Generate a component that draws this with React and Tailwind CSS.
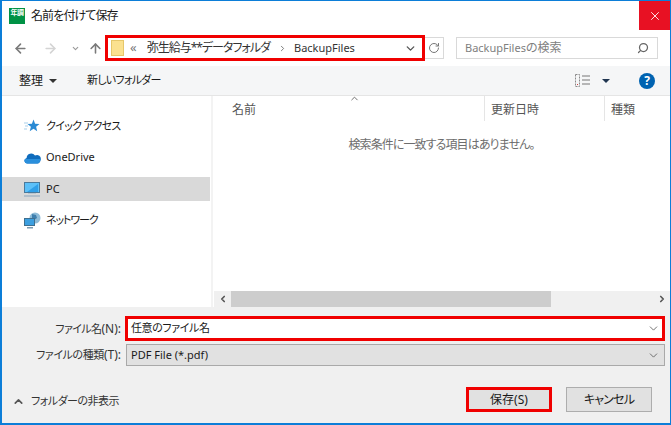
import React from "react";
import { ChevronDown, ChevronUp, ChevronLeft, ChevronRight, ArrowLeft, ArrowRight, ArrowUp, RotateCw, Search, X } from "lucide-react";

const navItems = [
  { label: "クイック アクセス", icon: <QuickIcon />, text: "text-[11px] tracking-[-0.7px]" },
  { label: "OneDrive", icon: <CloudIcon />, text: "text-[11px]" },
  { label: "PC", icon: <PcIcon />, selected: true, text: "text-[11px]" },
  { label: "ネットワーク", icon: <NetIcon />, text: "text-[11px] tracking-[-1.1px]" },
];

function QuickIcon() {
  return (
    <svg width="16" height="16" viewBox="0 0 16 16">
      <path d="M9.5 1.5l1.6 4.2 4.4.3-3.4 2.8 1.1 4.4-3.7-2.4-3.8 2.4 1.2-4.4-3.4-2.8 4.4-.3z" fill="#2a8ad4" />
      <path d="M0 5h4M1 8h3M0 11h3" stroke="#a9cfe9" strokeWidth="1" />
    </svg>
  );
}

function CloudIcon() {
  return (
    <svg width="17" height="12" viewBox="0 0 17 12">
      <path d="M3 11.5A2.8 2.8 0 0 1 2.6 6 4.6 4.6 0 0 1 11 3.6a3.8 3.8 0 0 1 5.6 4.4c-.3 2-1.6 3.5-3.2 3.5z" fill="#0f6cbd" />
      <path d="M3 11.5A2.8 2.8 0 0 1 1 7h15.6c-.3 2.5-1.6 4.5-3.2 4.5z" fill="#2a8fdc" />
    </svg>
  );
}

function PcIcon() {
  return (
    <svg width="17" height="15" viewBox="0 0 17 15">
      <rect x="0.5" y="0.5" width="15" height="10" fill="#5cc0f8" stroke="#4a7a9c" />
      <path d="M3 10L14 2v8z" fill="#2f9fe8" />
      <rect x="4" y="11" width="8" height="1" fill="#b9c6d0" />
      <rect x="0" y="13.5" width="16" height="1" fill="#8ba6bb" />
    </svg>
  );
}

function NetIcon() {
  return (
    <svg width="17" height="17" viewBox="0 0 17 17">
      <circle cx="11" cy="6" r="5.5" fill="#8fbcd8" />
      <path d="M8 2l4 1 1 3-3 2-2-2z" fill="#3f7fae" />
      <rect x="0.5" y="6.5" width="10" height="7" fill="#3c9fe0" stroke="#3f6f8f" />
      <rect x="3" y="15" width="6" height="1.5" fill="#7b9ab0" />
    </svg>
  );
}

function ViewIcon() {
  return (
    <svg width="16" height="13" viewBox="0 0 16 13">
      <rect x="0.5" y="0.5" width="4" height="12" fill="none" stroke="#8a8a8a" strokeDasharray="2 1" />
      <path d="M2 10h1v1H2z" fill="#d04040" />
      <path d="M7 2h8M7 6h8M7 10h8" stroke="#777" strokeWidth="1" />
    </svg>
  );
}

export default function App() {
  return (
    <div className="w-[671px] h-[425px] flex flex-col bg-white border-2 border-t border-r border-[#0c7ed8] text-[12px] [font-feature-settings:'palt'] text-[#1a1a1a] overflow-hidden font-['Noto_Sans','Noto_Sans_CJK_JP',sans-serif]">
      {/* title bar */}
      <div className="h-[29px] flex items-center shrink-0">
        <div className="w-[16px] h-[16px] ml-[7px] bg-[#009245] text-white text-[7px] font-bold leading-[10px] tracking-[-0.5px] text-center">年調</div>
        <span className="ml-[6px] tracking-[-0.9px]">名前を付けて保存</span>
        <div className="ml-auto w-[31px] h-[29px] bg-[#e81123] flex items-center justify-center">
          <X size={14} color="white" strokeWidth={1.5} />
        </div>
      </div>

      {/* address row */}
      <div className="h-[36px] flex items-center shrink-0 pl-[11px]">
        <ArrowLeft size={15} color="#7a7a7a" strokeWidth={2.5} />
        <ArrowRight size={15} color="#d4d4d4" strokeWidth={2.5} className="ml-[15px]" />
        <ChevronDown size={9} color="#9a9a9a" strokeWidth={3} className="ml-[13px]" />
        <ArrowUp size={15} color="#7a7a7a" strokeWidth={2.5} className="ml-[8px]" />
        <div className="ml-[2px] w-[320px] h-[26px] border-[3px] border-[#f00000] flex items-center pl-[3px] pr-[5px] text-[#333]">
          <div className="w-[13px] h-[16px] bg-[#fbe18f] border border-[#e6c76a] shrink-0" />
          <span className="ml-[6px] text-[#777] text-[13px]">«</span>
          <span className="ml-[10px] whitespace-nowrap tracking-[-1px]">弥生給与**データフォルダ</span>
          <ChevronRight size={9} color="#555" className="ml-[8px]" />
          <span className="ml-[7px] text-[11px]">BackupFiles</span>
          <ChevronDown size={13} color="#555" strokeWidth={2.5} className="ml-auto" />
        </div>
        <div className="w-[19px] h-[22px] border border-l-0 border-[#d9d9d9] flex items-center justify-center">
          <RotateCw size={12} color="#777" strokeWidth={2} />
        </div>
        <div className="ml-[12px] w-[202px] h-[22px] border border-[#d9d9d9] flex items-center px-[8px] text-[#808080]">
          <span><span className="text-[11px]">BackupFiles</span>の検索</span>
          <Search size={12} color="#666" strokeWidth={2.5} className="ml-auto -scale-x-100" />
        </div>
      </div>

      {/* toolbar */}
      <div className="h-[30px] bg-[#f5f6f7] border-b border-[#e5e5e5] flex items-center shrink-0 pl-[17px]">
        <span>整理</span>
        <span className="ml-[6px] w-0 h-0 border-x-[4px] border-x-transparent border-t-[4px] border-t-[#333]" />
        <span className="ml-[30px] text-[11px] tracking-[-0.75px]">新しいフォルダー</span>
        <div className="ml-auto flex items-center">
          <ViewIcon />
          <span className="ml-[11px] w-0 h-0 border-x-[4px] border-x-transparent border-t-[4px] border-t-[#1f3550]" />
          <div className="ml-[29px] mr-[15px] w-[16px] h-[16px] rounded-full bg-[#0063b1] text-white text-[12px] font-bold flex items-center justify-center">?</div>
        </div>
      </div>

      {/* main */}
      <div className="flex-1 flex min-h-0">
        <div className="w-[211px] border-r-2 border-[#f3f3f3] pt-[18px] shrink-0">
          {navItems.map((item) => (
            <div key={item.label} className={`h-[24px] mb-[7.5px] flex items-center pl-[22px] ${item.selected ? "bg-[#d9d9d9] mr-[1px]" : ""}`}>
              <span className="w-[20px] flex items-center shrink-0">{item.icon}</span>
              <span className={`ml-[2px] ${item.text}`}>{item.label}</span>
            </div>
          ))}
        </div>
        <div className="flex-1 flex flex-col min-w-0 text-[#555]">
          <div className="relative h-[25px] flex shrink-0">
            <ChevronUp size={11} color="#666" className="absolute left-[136px] -top-[3px]" />
            <div className="w-[272px] pl-[19px] pt-[5px] border-r border-[#e5e5e5]">名前</div>
            <div className="w-[120px] pl-[6px] pt-[5px] border-r border-[#e5e5e5]">更新日時</div>
            <div className="pl-[6px] pt-[5px]">種類</div>
          </div>
          <div className="flex-1 text-center text-[#6d6d6d] pt-[15px] tracking-[-0.9px]">検索条件に一致する項目はありません。</div>
          <div className="h-[16px] bg-[#f0f0f0] flex items-center shrink-0 ml-[1px]">
            <div className="w-[17px] flex justify-center"><ChevronLeft size={10} color="#555" strokeWidth={4} /></div>
            <div className="w-[320px] h-full bg-[#cdcdcd]" />
            <div className="ml-auto w-[17px] flex justify-center"><ChevronRight size={10} color="#555" strokeWidth={4} /></div>
          </div>
        </div>
      </div>

      {/* bottom panel */}
      <div className="h-[116px] bg-[#f0f0f0] shrink-0 flex flex-col pr-[4px]">
        <div className="flex items-center mt-[9px] h-[25px]">
          <div className="w-[119px] text-right text-[#333]"><span className="text-[11px] tracking-[-0.6px]">ファイル名</span>(N):</div>
          <div className="ml-[4px] w-[540px] h-[25px] border-[3px] border-[#f00000] bg-white flex items-center pl-[3px] pr-[2px]">
            <span className="text-[11px] tracking-[-0.4px]">任意のファイル名</span>
            <ChevronDown size={13} color="#555" strokeWidth={1.5} className="ml-auto" />
          </div>
        </div>
        <div className="flex items-center mt-[3px] h-[22px]">
          <div className="w-[119px] text-right text-[#333]"><span className="text-[11px] tracking-[-0.4px]">ファイルの種類</span>(T):</div>
          <div className="ml-[5px] w-[539px] h-[22px] border border-[#a9a9a9] bg-[#e1e1e1] flex items-center pl-[4px] pr-[4px]">
            <span className="text-[11px]">PDF File (*.pdf)</span>
            <ChevronDown size={13} color="#555" strokeWidth={1.5} className="ml-auto" />
          </div>
        </div>
        <div className="flex items-center mt-[21px] h-[25px]">
          <ChevronUp size={13} color="#555" strokeWidth={3} className="ml-[10px] translate-y-[2px]" />
          <span className="ml-[6px] text-[#333] text-[11px] tracking-[-0.5px] translate-y-[2px]">フォルダーの非表示</span>
          <div className="ml-auto w-[86px] h-[25px] border-[3px] border-[#f00000] bg-[#e1e1e1] flex items-center justify-center">保存(S)</div>
          <div className="ml-[14px] mr-[14px] w-[86px] h-[25px] border border-[#adadad] bg-[#e1e1e1] flex items-center justify-center tracking-[-0.8px]">キャンセル</div>
        </div>
      </div>
    </div>
  );
}
